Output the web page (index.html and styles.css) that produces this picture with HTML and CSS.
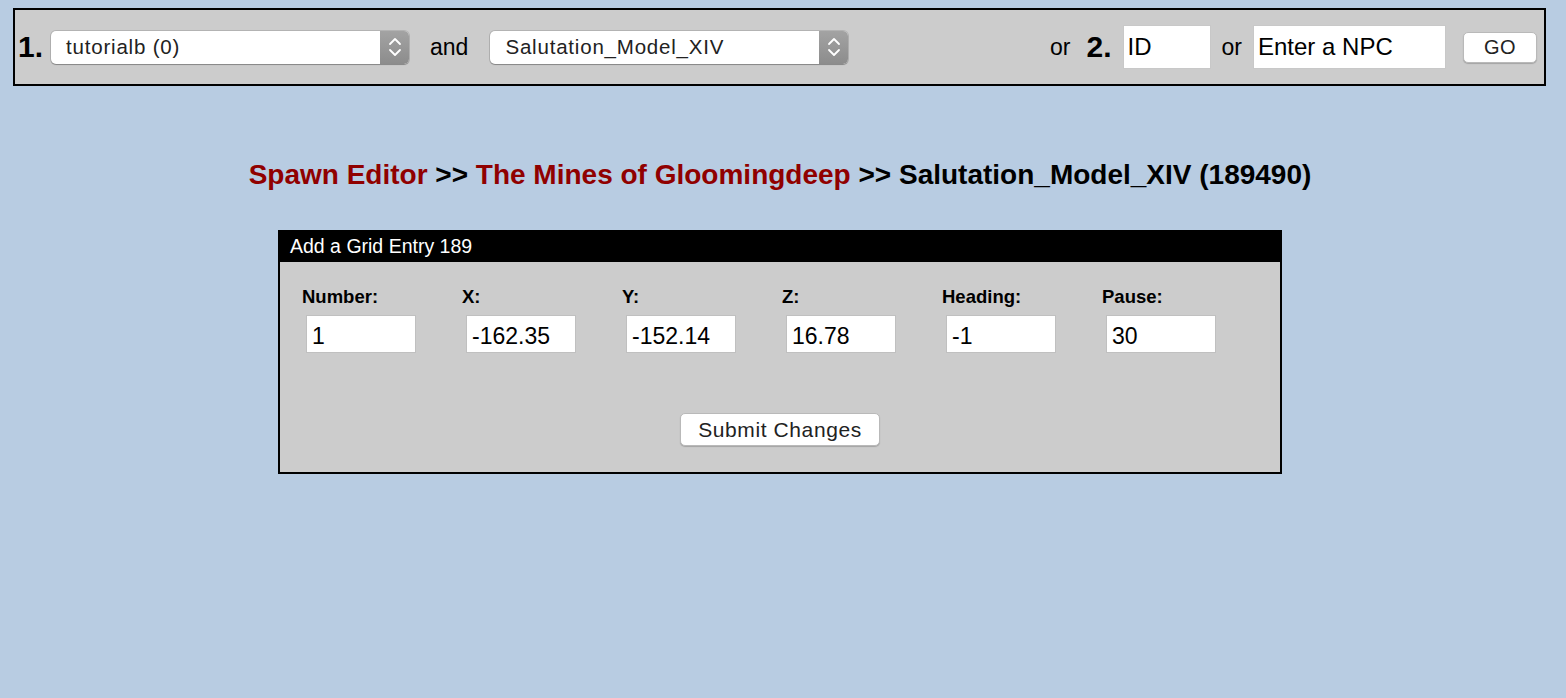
FILE: index.html
```html
<!DOCTYPE html>
<html>
<head>
<meta charset="utf-8">
<title>Spawn Editor</title>
<link rel="stylesheet" href="styles.css">
</head>
<body>
<div class="page">
  <div class="topbar">
    <span class="step">1.</span>
    <div class="select sel1">
      <span class="sel-text">tutorialb (0)</span>
      <span class="stepper"><svg width="14" height="22" viewBox="0 0 14 22"><path d="M2 8 L7 3 L12 8 M2 14 L7 19 L12 14" fill="none" stroke="#fff" stroke-width="1.8" stroke-linecap="round" stroke-linejoin="round"/></svg></span>
    </div>
    <span class="word and">and</span>
    <div class="select sel2">
      <span class="sel-text">Salutation_Model_XIV</span>
      <span class="stepper"><svg width="14" height="22" viewBox="0 0 14 22"><path d="M2 8 L7 3 L12 8 M2 14 L7 19 L12 14" fill="none" stroke="#fff" stroke-width="1.8" stroke-linecap="round" stroke-linejoin="round"/></svg></span>
    </div>
    <span class="spacer"></span>
    <span class="word or1">or</span>
    <span class="step step2">2.</span>
    <input class="tinput idbox" type="text" value="ID">
    <span class="word or2">or</span>
    <input class="tinput npcbox" type="text" value="Enter a NPC">
    <button class="btn gobtn">GO</button>
  </div>

  <h1 class="crumbs"><a class="crumb-link">Spawn Editor</a> &gt;&gt; <a class="crumb-link">The Mines of Gloomingdeep</a> &gt;&gt; Salutation_Model_XIV (189490)</h1>

  <div class="panel">
    <div class="panel-head">Add a Grid Entry 189</div>
    <div class="panel-body">
      <div class="fields">
        <div class="field"><label class="flabel">Number:</label><input class="finput" type="text" value="1"></div>
        <div class="field"><label class="flabel">X:</label><input class="finput" type="text" value="-162.35"></div>
        <div class="field"><label class="flabel">Y:</label><input class="finput" type="text" value="-152.14"></div>
        <div class="field"><label class="flabel">Z:</label><input class="finput" type="text" value="16.78"></div>
        <div class="field"><label class="flabel">Heading:</label><input class="finput" type="text" value="-1"></div>
        <div class="field"><label class="flabel">Pause:</label><input class="finput" type="text" value="30"></div>
      </div>
      <div class="submit-row"><button class="btn submit">Submit Changes</button></div>
    </div>
  </div>
</div>
</body>
</html>
```

FILE: styles.css
```css
html, body {
  margin: 0;
  padding: 0;
  background: #b8cce2;
  font-family: "Liberation Sans", Arial, sans-serif;
  color: #000;
}
.page {
  width: 1560px;
  height: 698px;
}
.topbar {
  margin: 8px 0 0 13px;
  width: 1533px;
  height: 78px;
  box-sizing: border-box;
  border: 2px solid #000;
  background: #cccccc;
  display: flex;
  align-items: center;
  padding: 0 7px 0 3px;
}
.step {
  font-weight: bold;
  font-size: 30px;
  line-height: 1;
}
.select {
  display: flex;
  align-items: stretch;
  height: 33px;
  width: 358px;
  box-sizing: border-box;
  background: #fff;
  border-radius: 5px;
  box-shadow: 0 0 0 1px rgba(0,0,0,0.12), 0 1px 1px rgba(0,0,0,0.25);
  overflow: hidden;
}
.sel1 { margin-left: 8px; }
.sel2 { margin-left: 22px; }
.sel-text {
  flex: 1;
  display: flex;
  align-items: center;
  padding-left: 15px;
  font-size: 20.5px;
  letter-spacing: 0.8px;
  color: #222;
}
.stepper {
  width: 29px;
  display: flex;
  align-items: center;
  justify-content: center;
  background: linear-gradient(#a3a3a3, #8c8c8c);
}
.word {
  font-size: 23px;
}
.and { margin-left: 21px; }
.spacer { flex: 1; }
.step2 { margin-left: 16px; }
.tinput {
  height: 44px;
  box-sizing: border-box;
  border: 1px solid #c8c8c8;
  background: #fff;
  font-family: "Liberation Sans", Arial, sans-serif;
  font-size: 24px;
  padding: 0 4px;
  color: #000;
  outline: none;
}
.idbox { width: 88px; margin-left: 11px; }
.or2 { margin-left: 11px; }
.npcbox { width: 193px; margin-left: 11px; }
.btn {
  background: #fff;
  border: 1px solid #b9b9b9;
  border-radius: 5px;
  box-shadow: 0 1px 1px rgba(0,0,0,0.2);
  font-family: "Liberation Sans", Arial, sans-serif;
  color: #222;
  padding: 0;
}
.gobtn {
  margin-left: 17px;
  width: 74px;
  height: 31px;
  font-size: 20px;
  letter-spacing: 0.5px;
}
.crumbs {
  margin: 73px 0 0 0;
  text-align: center;
  font-size: 28px;
  line-height: 32px;
  font-weight: bold;
}
.crumb-link {
  color: #900000;
  text-decoration: none;
}
.panel {
  width: 1004px;
  box-sizing: border-box;
  margin: 39px auto 0;
  border: 2px solid #000;
  background: #cccccc;
}
.panel-head {
  background: #000;
  color: #fff;
  height: 30px;
  line-height: 28px;
  font-size: 19.5px;
  padding-left: 10px;
}
.panel-body {
  padding: 24px 0 26px 22px;
}
.fields {
  display: flex;
}
.field {
  width: 160px;
  display: flex;
  flex-direction: column;
  align-items: flex-start;
}
.flabel {
  font-weight: bold;
  font-size: 18.5px;
  line-height: 22px;
}
.finput {
  margin: 7px 0 0 4px;
  width: 110px;
  height: 38px;
  box-sizing: border-box;
  border: 1px solid #c0c0c0;
  background: #fff;
  font-family: "Liberation Sans", Arial, sans-serif;
  font-size: 23px;
  padding: 4px 5px 0;
  color: #000;
  outline: none;
}
.submit-row {
  display: flex;
  justify-content: center;
  margin: 60px 22px 0 0;
}
.submit {
  width: 200px;
  height: 33px;
  font-size: 21px;
  letter-spacing: 0.6px;
}
```
